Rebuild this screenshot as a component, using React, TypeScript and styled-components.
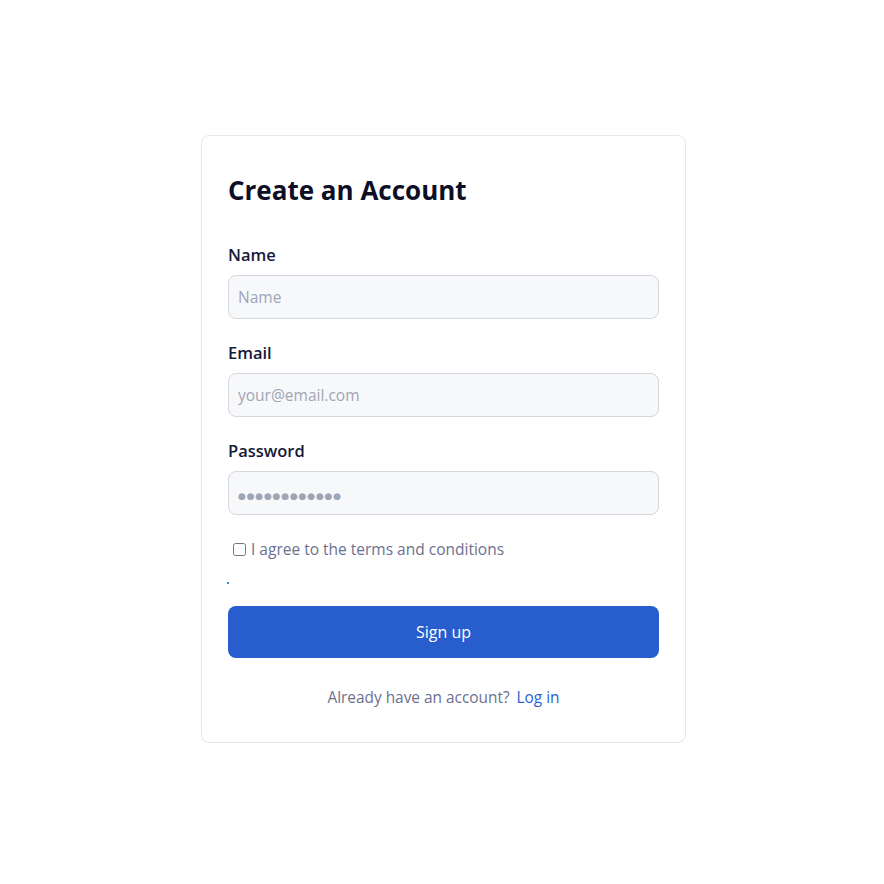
import React from "react";
import styled, { createGlobalStyle } from "styled-components";

const GlobalStyle = createGlobalStyle`
  html, body {
    margin: 0;
    padding: 0;
    background: #ffffff;
    font-family: "Open Sans", "Noto Sans", sans-serif;
  }
  * {
    box-sizing: border-box;
  }
`;

export default function App() {
  return (
    <>
      <GlobalStyle />
      <Page>
        <Card>
          <Title>Create an Account</Title>
          <Field>
            <Label htmlFor="name">Name</Label>
            <Input id="name" type="text" placeholder="Name" />
          </Field>
          <Field>
            <Label htmlFor="email">Email</Label>
            <Input id="email" type="email" placeholder="your@email.com" />
          </Field>
          <Field>
            <Label htmlFor="password">Password</Label>
            <Input
              id="password"
              type="password"
              placeholder="●●●●●●●●●●●●"
              $masked
            />
          </Field>
          <Terms>
            <input type="checkbox" />
            <span>I agree to the terms and conditions</span>
          </Terms>
          <Dot />
          <SubmitButton type="button">Sign up</SubmitButton>
          <Footer>
            Already have an account? <a href="#">Log in</a>
          </Footer>
        </Card>
      </Page>
    </>
  );
}

const Page = styled.div`
  display: flex;
  justify-content: center;
  padding: 135px 0 0 3px;
  min-height: 100vh;
`;

const Card = styled.div`
  width: 485px;
  height: 608px;
  border: 1px solid #e6e8ec;
  border-radius: 8px;
  padding: 36px 26px 26px;
  display: flex;
  flex-direction: column;
`;

const Title = styled.h1`
  margin: 0 0 36px;
  font-size: 26px;
  font-weight: 700;
  line-height: 36px;
  color: #0d0f26;
`;

const Field = styled.div`
  display: flex;
  flex-direction: column;
  gap: 9px;
  margin-bottom: 23px;
`;

const Label = styled.label`
  font-size: 16.5px;
  font-weight: 600;
  line-height: 22px;
  color: #161a3a;
`;

const Input = styled.input<{ $masked?: boolean }>`
  height: 44px;
  width: 100%;
  border: 1px solid #d5d8e0;
  border-radius: 8px;
  background: #f7f8fa;
  padding: 0 9px;
  font-family: inherit;
  font-size: 15.5px;
  color: #1a1f3d;
  outline: none;

  &::placeholder {
    color: #a0a5b6;
    font-family: ${(p) => (p.$masked ? '"DejaVu Sans", sans-serif' : "inherit")};
    font-size: ${(p) => (p.$masked ? "9px" : "15.5px")};
    letter-spacing: ${(p) => (p.$masked ? "0.8px" : "normal")};
  }
`;

const Terms = styled.label`
  display: flex;
  align-items: center;
  gap: 2px;
  font-size: 15.5px;
  color: #6b7190;
  padding-left: 1px;

  input {
    margin: 0 3px 0 4px;
    width: 13px;
    height: 13px;
  }
`;

const Dot = styled.div`
  width: 2px;
  height: 2px;
  background: #3a8fd0;
  margin: 22px 0 22px -1px;
`;

const SubmitButton = styled.button`
  height: 52px;
  width: 100%;
  border: none;
  border-radius: 8px;
  background: #275dcc;
  color: #ffffff;
  font-family: inherit;
  font-size: 16px;
  cursor: pointer;
`;

const Footer = styled.p`
  margin: 29px 0 0;
  text-align: center;
  font-size: 15.4px;
  color: #6b7190;

  a {
    color: #2a62d1;
    text-decoration: none;
    margin-left: 3px;
  }
`;
